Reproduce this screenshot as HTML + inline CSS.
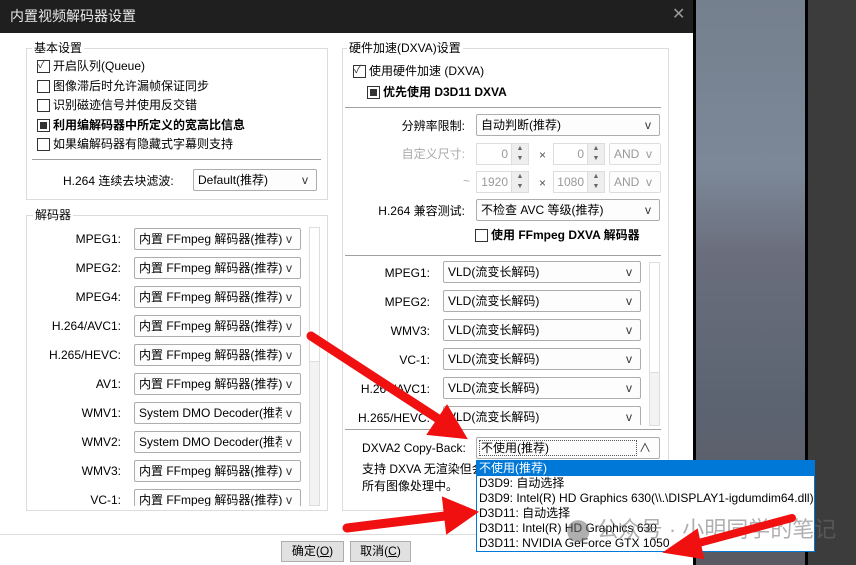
<!DOCTYPE html><html><head><meta charset="utf-8"><style>
*{margin:0;padding:0;box-sizing:border-box}
body{width:856px;height:565px;overflow:hidden;position:relative;background:#3c3c3c;font-family:"Liberation Sans","Noto Sans CJK SC",sans-serif;font-size:12px;color:#000}
.a{position:absolute;white-space:nowrap;line-height:14px}
.g{position:absolute;border:1px solid #dcdcdc}
.gl{position:absolute;background:#fff;padding:0 2px;line-height:14px}
.cb{position:absolute;width:13px;height:13px;border:1px solid #333;background:#fff}
.sel{position:absolute;height:22px;border:1px solid #adadad;border-radius:2px;background:#fdfdfd;padding-left:4px;line-height:20px;overflow:hidden;white-space:nowrap}
.sel i{position:absolute;right:8px;top:0;font-style:normal;color:#333;background:#fdfdfd;padding-left:4px}
.dis{border-color:#ddd;color:#999}
.dis i{color:#999}
.sep{position:absolute;height:1px;background:#a0a0a0}
.r{text-align:right}
.sb{position:absolute;border:1px solid #ddd;background:#f3f3f3}
.sp{position:absolute;height:22px;border:1px solid #ddd;background:#fff;color:#999;line-height:20px;text-align:right;padding-right:20px}
.sp b{position:absolute;right:0;top:0;width:17px;height:20px;background:#eee;border-left:1px solid #ddd;font-weight:normal;font-size:7px;line-height:10px;text-align:center;color:#666}
.dd div{height:15px;line-height:15px;padding-left:2px}
</style></head><body>
<div style="position:absolute;left:693px;top:0;width:3px;height:565px;background:#000"></div>
<div style="position:absolute;left:696px;top:0;width:109px;height:565px;background:linear-gradient(#75808e,#7c8898 30%,#6a6e7c 45%,#5c6472 70%,#5a5a62)"></div>
<div style="position:absolute;left:805px;top:0;width:3px;height:565px;background:#000"></div>
<div style="position:absolute;left:0;top:0;width:693px;height:33px;background:#1f1f1f"></div>
<div class="a" style="left:10px;top:8px;color:#e8e8e8;font-size:14px;line-height:16px">内置视频解码器设置</div>
<div class="a" style="left:672px;top:6px;color:#999;font-size:16px;line-height:18px">✕</div>
<div style="position:absolute;left:0;top:33px;width:693px;height:532px;background:#fff"></div>
<div style="position:absolute;left:0;top:534px;width:693px;height:1px;background:#dcdcdc"></div>

<!-- left group 1 -->
<div class="g" style="left:26px;top:48px;width:302px;height:152px"></div>
<div class="gl" style="left:32px;top:41px">基本设置</div>
<div class="cb" style="left:37px;top:60px"></div><div class="a" style="left:38px;top:58px;font-size:11px;color:#444">✓</div>
<div class="a" style="left:53px;top:59px">开启队列(Queue)</div>
<div class="cb" style="left:37px;top:80px"></div><div class="a" style="left:53px;top:79px">图像滞后时允许漏帧保证同步</div>
<div class="cb" style="left:37px;top:99px"></div><div class="a" style="left:53px;top:98px">识别磁迹信号并使用反交错</div>
<div class="cb" style="left:37px;top:119px"><div style="margin:2px;width:7px;height:7px;background:#333"></div></div><div class="a" style="left:53px;top:118px;font-weight:bold">利用编解码器中所定义的宽高比信息</div>
<div class="cb" style="left:37px;top:138px"></div><div class="a" style="left:53px;top:137px">如果编解码器有隐藏式字幕则支持</div>
<div class="sep" style="left:32px;top:159px;width:289px"></div>
<div class="a" style="left:63px;top:174px">H.264 连续去块滤波:</div>
<div class="sel" style="left:193px;top:169px;width:124px">Default(推荐)<i>v</i></div>

<!-- decoder group -->
<div class="g" style="left:26px;top:215px;width:302px;height:296px"></div>
<div class="gl" style="left:33px;top:208px">解码器</div>
<div style="position:absolute;left:30px;top:224px;width:296px;height:282px;overflow:hidden">
<div class="a r" style="left:0;top:8px;width:91px">MPEG1:</div><div class="sel" style="left:104px;top:4px;width:167px">内置 FFmpeg 解码器(推荐)<i>v</i></div>
<div class="a r" style="left:0;top:37px;width:91px">MPEG2:</div><div class="sel" style="left:104px;top:33px;width:167px">内置 FFmpeg 解码器(推荐)<i>v</i></div>
<div class="a r" style="left:0;top:66px;width:91px">MPEG4:</div><div class="sel" style="left:104px;top:62px;width:167px">内置 FFmpeg 解码器(推荐)<i>v</i></div>
<div class="a r" style="left:0;top:95px;width:91px">H.264/AVC1:</div><div class="sel" style="left:104px;top:91px;width:167px">内置 FFmpeg 解码器(推荐)<i>v</i></div>
<div class="a r" style="left:0;top:124px;width:91px">H.265/HEVC:</div><div class="sel" style="left:104px;top:120px;width:167px">内置 FFmpeg 解码器(推荐)<i>v</i></div>
<div class="a r" style="left:0;top:153px;width:91px">AV1:</div><div class="sel" style="left:104px;top:149px;width:167px">内置 FFmpeg 解码器(推荐)<i>v</i></div>
<div class="a r" style="left:0;top:182px;width:91px">WMV1:</div><div class="sel" style="left:104px;top:178px;width:167px">System DMO Decoder(推荐)<i>v</i></div>
<div class="a r" style="left:0;top:211px;width:91px">WMV2:</div><div class="sel" style="left:104px;top:207px;width:167px">System DMO Decoder(推荐)<i>v</i></div>
<div class="a r" style="left:0;top:240px;width:91px">WMV3:</div><div class="sel" style="left:104px;top:236px;width:167px">内置 FFmpeg 解码器(推荐)<i>v</i></div>
<div class="a r" style="left:0;top:269px;width:91px">VC-1:</div><div class="sel" style="left:104px;top:265px;width:167px">内置 FFmpeg 解码器(推荐)<i>v</i></div>
</div>
<div class="sb" style="left:309px;top:227px;width:11px;height:279px"><div style="background:#fff;height:134px;border-bottom:1px solid #ddd"></div></div>

<!-- right group -->
<div class="g" style="left:342px;top:48px;width:327px;height:463px"></div>
<div class="gl" style="left:347px;top:41px">硬件加速(DXVA)设置</div>
<div class="cb" style="left:353px;top:65px"></div><div class="a" style="left:354px;top:63px;font-size:11px;color:#444">✓</div>
<div class="a" style="left:369px;top:64px">使用硬件加速 (DXVA)</div>
<div class="cb" style="left:367px;top:86px"><div style="margin:2px;width:7px;height:7px;background:#333"></div></div>
<div class="a" style="left:383px;top:85px;font-weight:bold">优先使用 D3D11 DXVA</div>
<div class="sep" style="left:345px;top:107px;width:316px"></div>
<div class="a r" style="left:360px;top:119px;width:105px">分辨率限制:</div>
<div class="sel" style="left:476px;top:114px;width:184px">自动判断(推荐)<i>v</i></div>
<div class="a r" style="left:360px;top:147px;width:105px;color:#aaa">自定义尺寸:</div>
<div class="sp" style="left:476px;top:143px;width:53px">0<b>▲<br>▼</b></div>
<div class="a" style="left:539px;top:148px;color:#555">×</div>
<div class="sp" style="left:553px;top:143px;width:52px">0<b>▲<br>▼</b></div>
<div class="sel dis" style="left:609px;top:143px;width:52px">AND<i>v</i></div>
<div class="a" style="left:463px;top:174px;color:#aaa">~</div>
<div class="sp" style="left:476px;top:171px;width:53px">1920<b>▲<br>▼</b></div>
<div class="a" style="left:539px;top:176px;color:#555">×</div>
<div class="sp" style="left:553px;top:171px;width:52px">1080<b>▲<br>▼</b></div>
<div class="sel dis" style="left:609px;top:171px;width:52px">AND<i>v</i></div>
<div class="a r" style="left:340px;top:204px;width:125px">H.264 兼容测试:</div>
<div class="sel" style="left:476px;top:199px;width:184px">不检查 AVC 等级(推荐)<i>v</i></div>
<div class="cb" style="left:475px;top:229px"></div>
<div class="a" style="left:491px;top:228px;font-weight:bold">使用 FFmpeg DXVA 解码器</div>
<div class="sep" style="left:345px;top:255px;width:316px"></div>
<div class="a r" style="left:345px;top:266px;width:85px">MPEG1:</div><div class="sel" style="left:443px;top:261px;width:198px">VLD(流变长解码)<i>v</i></div>
<div class="a r" style="left:345px;top:295px;width:85px">MPEG2:</div><div class="sel" style="left:443px;top:290px;width:198px">VLD(流变长解码)<i>v</i></div>
<div class="a r" style="left:345px;top:324px;width:85px">WMV3:</div><div class="sel" style="left:443px;top:319px;width:198px">VLD(流变长解码)<i>v</i></div>
<div class="a r" style="left:345px;top:353px;width:85px">VC-1:</div><div class="sel" style="left:443px;top:348px;width:198px">VLD(流变长解码)<i>v</i></div>
<div class="a r" style="left:345px;top:382px;width:85px">H.264/AVC1:</div><div class="sel" style="left:443px;top:377px;width:198px">VLD(流变长解码)<i>v</i></div>
<div style="position:absolute;left:345px;top:406px;width:310px;height:19px;overflow:hidden">
<div class="a r" style="left:0;top:5px;width:85px">H.265/HEVC:</div><div class="sel" style="left:98px;top:0;width:198px">VLD(流变长解码)<i>v</i></div></div>
<div class="sb" style="left:649px;top:262px;width:11px;height:164px"><div style="background:#fff;height:110px;border-bottom:1px solid #ddd"></div></div>
<div class="sep" style="left:345px;top:429px;width:316px"></div>
<div class="a" style="left:362px;top:441px">DXVA2 Copy-Back:</div>
<div class="sel" style="left:476px;top:437px;width:184px">不使用(推荐)<i>∧</i><div style="position:absolute;left:2px;top:2px;width:158px;height:16px;border:1px dotted #555"></div></div>
<div class="a" style="left:362px;top:462px">支持 DXVA 无渲染但会把硬件解码结果复制到</div>
<div class="a" style="left:362px;top:479px">所有图像处理中。</div>

<!-- buttons -->
<div style="position:absolute;left:281px;top:541px;width:63px;height:21px;border:1px solid #adadad;background:#e1e1e1;text-align:center;line-height:19px">确定(<u>O</u>)</div>
<div style="position:absolute;left:350px;top:541px;width:61px;height:21px;border:1px solid #adadad;background:#e1e1e1;text-align:center;line-height:19px">取消(<u>C</u>)</div>

<!-- dropdown -->
<div class="dd" style="position:absolute;left:476px;top:460px;width:339px;height:92px;border:1px solid #0078d7;background:#fff;line-height:15px;white-space:nowrap">
<div style="background:#0078d7;color:#fff">不使用(推荐)</div>
<div>D3D9: 自动选择</div>
<div>D3D9: Intel(R) HD Graphics 630(\\.\DISPLAY1-igdumdim64.dll)</div>
<div>D3D11: 自动选择</div>
<div>D3D11: Intel(R) HD Graphics 630</div>
<div>D3D11: NVIDIA GeForce GTX 1050</div>
</div>
<div class="a" style="left:566px;top:517px;font-size:22px;line-height:26px;color:rgba(110,110,110,.55)">⬤ 公众号 · 小明同学的笔记</div>

<svg style="position:absolute;left:0;top:0" width="856" height="565">
<g fill="#f01010" stroke="#f01010" stroke-linecap="round">
<line x1="311" y1="336" x2="440" y2="420" stroke-width="9"/>
<polygon points="466,438 428,434 447,406" stroke-width="2"/>
<line x1="347" y1="528" x2="445" y2="516" stroke-width="9"/>
<polygon points="477,512 443,498 447,533" stroke-width="2"/>
<line x1="792" y1="518" x2="695" y2="544" stroke-width="8"/>
<polygon points="665,552 697,530 703,558" stroke-width="2"/>
</g></svg>
</body></html>
